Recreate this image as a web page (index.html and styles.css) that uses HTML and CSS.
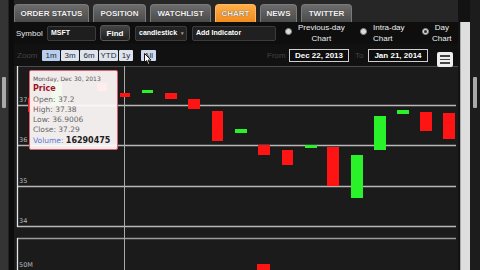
FILE: index.html
```html
<!DOCTYPE html>
<html>
<head>
<meta charset="utf-8">
<link rel="stylesheet" href="styles.css">
</head>
<body>
<div class="page">
  <div class="lgutter">
    <div class="lstrip"><div class="thumb"></div></div>
  </div>
  <div class="main">
    <div class="tabs">
      <div class="tab w-order">ORDER STATUS</div>
      <div class="tab w-pos">POSITION</div>
      <div class="tab w-watch">WATCHLIST</div>
      <div class="tab w-chart active">CHART</div>
      <div class="tab w-news">NEWS</div>
      <div class="tab w-tw">TWITTER</div>
    </div>
    <div class="controls">
      <span class="lbl">Symbol</span>
      <div class="field sym">MSFT</div>
      <div class="btn find">Find</div>
      <div class="field sel">candlestick<span class="arrow">&#9662;</span></div>
      <div class="field ind">Add Indicator</div>
      <div class="radio g1"><span class="dot"></span><span class="rl">Previous-day<br>Chart</span></div>
      <div class="radio g2"><span class="dot"></span><span class="rl left">Intra-day<br>Chart</span></div>
      <div class="radio g3"><span class="dot on"></span><span class="rl">Day<br>Chart</span></div>
    </div>
    <div class="zoomrow">
      <span class="dim zl">Zoom</span>
      <div class="zbtns">
        <span class="zb sel1 w18">1m</span>
        <span class="zb w18">3m</span>
        <span class="zb w18">6m</span>
        <span class="zb w19">YTD</span>
        <span class="zb w14">1y</span>
      </div>
      <span class="zb all">All<svg class="cursor" width="8" height="12" viewBox="0 0 8 12"><path d="M0.5 0.5 L0.5 9.5 L2.6 7.6 L4.2 11.3 L5.6 10.7 L4.1 7.1 L7 7.1 Z" fill="#fff" stroke="#000" stroke-width="0.9"/></svg></span>
      <span class="dim from">From</span>
      <div class="date">Dec 22, 2013</div>
      <span class="dim to">To</span>
      <div class="date">Jan 21, 2014</div>
      <div class="menu"><i></i><i></i><i></i></div>
    </div>
    <div class="chart">
      <svg class="plot" width="444" height="204" viewBox="0 0 444 204">
        <line x1="3" y1="0.5" x2="444" y2="0.5" stroke="#4a4a4a"/>
        <g stroke="#b8b8b8" stroke-width="1.3">
          <line x1="3" y1="39.5" x2="442" y2="39.5"/>
          <line x1="3" y1="79.5" x2="442" y2="79.5"/>
          <line x1="3" y1="120.5" x2="442" y2="120.5"/>
          <line x1="3" y1="160.5" x2="442" y2="160.5"/>
        </g>
        <line x1="3" y1="172.5" x2="442" y2="172.5" stroke="#9a9a9a" stroke-width="1.3"/>
        <line x1="3.5" y1="0" x2="3.5" y2="161" stroke="#e6e6e6" stroke-width="1.3"/>
        <line x1="3.5" y1="172" x2="3.5" y2="204" stroke="#e6e6e6" stroke-width="1.3"/>
        <line x1="110.5" y1="0" x2="110.5" y2="204" stroke="#a8a8a8"/>
        <g class="ylab">
          <text x="5" y="36">37</text>
          <text x="5" y="76">36</text>
          <text x="5" y="117">35</text>
          <text x="5" y="157">34</text>
          <text x="5" y="201">50M</text>
        </g>
        <g fill="#ff1414">
          <rect x="14" y="32" width="11" height="14"/>
          <rect x="83" y="17" width="10" height="8"/>
          <rect x="106" y="27" width="10" height="4"/>
          <rect x="151" y="27" width="12" height="6"/>
          <rect x="174" y="33" width="12" height="10"/>
          <rect x="198" y="45" width="11" height="30"/>
          <rect x="244" y="79" width="12" height="10"/>
          <rect x="268" y="84" width="11" height="15"/>
          <rect x="313" y="81" width="12" height="39"/>
          <rect x="406" y="46" width="12" height="19"/>
          <rect x="429" y="47" width="12" height="26"/>
          <rect x="243" y="198" width="13" height="6"/>
        </g>
        <g fill="#2af22a">
          <rect x="37" y="16" width="11" height="23"/>
          <rect x="128" y="24" width="11" height="3"/>
          <rect x="221" y="63" width="12" height="4"/>
          <rect x="291" y="79" width="12" height="3"/>
          <rect x="337" y="89" width="12" height="43"/>
          <rect x="360" y="50" width="12" height="34"/>
          <rect x="383" y="44" width="12" height="4"/>
        </g>
      </svg>
      <div class="tooltip">
        <div class="tdate">Monday, Dec 30, 2013</div>
        <div class="tprice">Price</div>
        <div class="trow">Open: 37.2</div>
        <div class="trow">High: 37.38</div>
        <div class="trow">Low: 36.9006</div>
        <div class="trow">Close: 37.29</div>
        <div class="trow"><span class="vol">Volume:</span> <b>16290475</b></div>
      </div>
    </div>
  </div>
  <div class="rgutter">
    <div class="rgap"></div>
    <div class="rstrip"></div>
    <div class="rscroll"><div class="thumb"></div></div>
  </div>
</div>
</body>
</html>
```
FILE: styles.css
```css
* { box-sizing: border-box; }
html, body { margin: 0; padding: 0; }
body {
  width: 480px;
  height: 270px;
  overflow: hidden;
  background: #161616;
  font-family: "Liberation Sans", Arial, sans-serif;
  color: #fff;
}
.page {
  display: flex;
  width: 480px;
  height: 270px;
}
.lgutter {
  width: 14px;
  display: flex;
  background: #0c0c0c;
}
.lstrip {
  width: 9px;
  background: #343434;
  border-right: 1px solid #222;
  padding-top: 77px;
  display: flex;
  justify-content: center;
}
.thumb {
  width: 4px;
  height: 31px;
  background: #a9a9a9;
  border-radius: 1px;
}
.main {
  width: 444px;
  display: flex;
  flex-direction: column;
}
.tabs {
  height: 22px;
  padding-top: 4px;
  display: flex;
  gap: 4px;
  background: #262626;
}
.tab {
  height: 18px;
  display: flex;
  align-items: center;
  justify-content: center;
  font-size: 8px;
  font-weight: bold;
  color: #f2f2f2;
  background: linear-gradient(#6c6c6c, #4a4a4a);
  border: 1px solid #7a7a7a;
  border-bottom: none;
  border-radius: 4px 4px 0 0;
  text-shadow: 0 0 1px #222;
}
.tab.active {
  background: linear-gradient(#ffae48, #f08b1d);
  border-color: #ffb866;
}
.w-order { width: 75px; }
.w-pos { width: 53px; }
.w-watch { width: 61px; }
.w-chart { width: 41px; }
.w-news { width: 37px; }
.w-tw { width: 51px; }

.controls {
  height: 22px;
  display: flex;
  align-items: center;
  background: #0e0e0e;
  padding-left: 2px;
}
.lbl {
  font-size: 8px;
  color: #e8e8e8;
  width: 31px;
}
.field {
  height: 15px;
  background: #1e1e1e;
  border: 1px solid #3c3c3c;
  border-radius: 2px;
  font-size: 7px;
  font-weight: bold;
  color: #fff;
  padding: 2px 3px;
  position: relative;
}
.sym { width: 49px; }
.sel { width: 52px; margin-left: 5px; background: #232323; }
.ind { width: 84px; margin-left: 5px; background: #202020; }
.arrow {
  position: absolute;
  right: 2px;
  top: 3px;
  font-size: 5px;
  color: #999;
}
.btn {
  height: 16px;
  width: 30px;
  margin-left: 4px;
  display: flex;
  align-items: center;
  justify-content: center;
  font-size: 8px;
  font-weight: bold;
  color: #fff;
  background: linear-gradient(#444, #1f1f1f);
  border: 1px solid #575757;
  border-radius: 3px;
}
.radio {
  display: flex;
  align-items: center;
  gap: 6px;
}
.g1 { margin-left: 9px; width: 75px; }
.g2 { width: 62px; gap: 6px; }
.g3 { width: 36px; gap: 3px; }
.dot {
  width: 7px;
  height: 7px;
  border-radius: 50%;
  background: #dcdcdc;
  border: 1px solid #8a8a8a;
  flex: none;
  display: flex;
  align-items: center;
  justify-content: center;
  margin-top: -3px;
}
.dot.on::after {
  content: "";
  width: 3px;
  height: 3px;
  border-radius: 50%;
  background: #333;
}
.rl {
  font-size: 8px;
  line-height: 11px;
  color: #f0f0f0;
  text-align: center;
}
.rl.left { text-align: left; }

.zoomrow {
  height: 22px;
  display: flex;
  align-items: center;
  background: #111;
  padding-left: 3px;
  padding-right: 5px;
}
.dim {
  font-size: 8px;
  color: #444;
}
.zl { width: 25px; }
.zbtns {
  display: flex;
  gap: 1px;
}
.zb {
  height: 11px;
  display: flex;
  align-items: center;
  justify-content: center;
  font-size: 8px;
  color: #2a2a2a;
  background: #dde4ee;
  border-radius: 1px;
}
.zb.sel1 { background: #b9cdee; }
.w18 { width: 18px; }
.w19 { width: 19px; }
.w14 { width: 14px; }
.zb.all {
  width: 15px;
  margin-left: 8px;
  background: #cfdaee;
  position: relative;
}
.cursor {
  position: absolute;
  left: 3px;
  top: 3px;
}
.from { margin-left: auto; width: 22px; }
.to { width: 13px; margin-left: 6px; }
.date {
  width: 60px;
  height: 13px;
  border: 1px solid #cfcfcf;
  background: #0e0e0e;
  font-size: 8px;
  font-weight: bold;
  color: #fff;
  display: flex;
  align-items: center;
  justify-content: center;
}
.menu {
  width: 16px;
  height: 15px;
  margin-left: 9px;
  align-self: flex-end;
  margin-bottom: -1px;
  background: #efefef;
  border-radius: 2px;
  display: flex;
  flex-direction: column;
  justify-content: center;
  gap: 2px;
  padding: 0 3px;
  position: relative;
  z-index: 2;
}
.menu i {
  display: block;
  height: 1.5px;
  background: #444;
}
.chart {
  flex: 1;
  position: relative;
  background: #1b1b1b;
}
.plot { display: block; }
.ylab text {
  font-family: "DejaVu Sans", sans-serif;
  font-size: 6.5px;
  fill: #b8b8b8;
}
.tooltip {
  position: absolute;
  left: 15px;
  top: 4px;
  width: 89px;
  height: 80px;
  background: rgba(255, 250, 250, 0.94);
  border: 1px solid #e06070;
  border-radius: 2px;
  padding: 3px 3px 0 3px;
  font-family: "DejaVu Sans", sans-serif;
  font-size: 7.5px;
  color: #666;
  line-height: 10.3px;
}
.tdate {
  font-size: 6px;
  color: #555;
}
.tprice {
  font-size: 8px;
  font-weight: bold;
  color: #a01028;
}
.trow b {
  font-size: 8px;
  color: #222;
}
.vol { color: #5a7ad6; }
.rgutter {
  width: 22px;
  display: flex;
  background: #121212;
}
.rgap { width: 2px; }
.rstrip {
  width: 10px;
  margin-top: 22px;
  background: #dedede;
  border-left: 1px solid #aaa;
}
.rscroll {
  width: 10px;
  background: #1c1c1c;
  padding-top: 77px;
  display: flex;
  justify-content: center;
}
```
